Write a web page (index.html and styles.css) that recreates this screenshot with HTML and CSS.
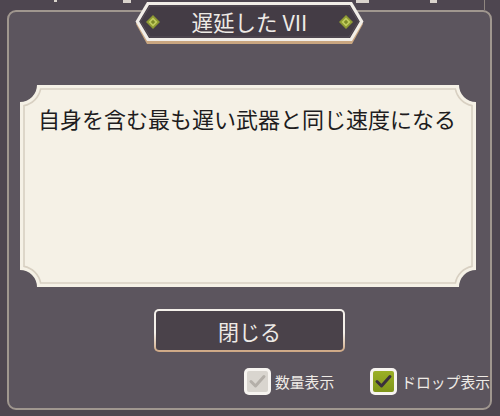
FILE: index.html
```html
<!DOCTYPE html>
<html lang="ja">

<head>
<title>遅延した VII</title>
<meta charset="utf-8" />
<meta name="viewport" content="width=device-width, initial-scale=1.0">

<link rel="stylesheet" href="styles.css">
</head>

<body>
<div class="screen">
  <div class="topbar">
    <span class="mark mark-a"></span>
    <span class="mark mark-b"></span>
    <span class="mark mark-c"></span>
    <span class="mark mark-d"></span>
    <span class="mark mark-e"></span>
  </div>

  <div class="panel">
    <!-- title plate -->
    <div class="title">
      <svg class="title-bg" width="229" height="44" viewBox="0 0 229 44">
        <path d="M12,4 H217 L228,23 L217,43 H12 L1,23 Z" fill="#c9a680"/>
        <path d="M12,1 H217 L228.5,20.5 L217,40 H12 L0.5,20.5 Z" fill="#f2eee8"/>
        <path d="M14,4 H215 L224.8,20.5 L215,37 H14 L4.2,20.5 Z" fill="#443c45"/>
        <path d="M15,5 H214 L223.6,20.5 L214,36 H15 L5.4,20.5 Z" fill="none" stroke="#574f58" stroke-width="1"/>
        <g transform="translate(18 21)">
          <path d="M0,-7 L7,0 L0,7 L-7,0 Z" fill="#8e9a33"/>
          <path d="M0,-4.5 L4.5,0 L0,4.5 L-4.5,0 Z" fill="#c2cc5e"/>
          <path d="M0,-2.2 L2.2,0 L0,2.2 L-2.2,0 Z" fill="#7d8a28"/>
        </g>
        <g transform="translate(211 21)">
          <path d="M0,-7 L7,0 L0,7 L-7,0 Z" fill="#8e9a33"/>
          <path d="M0,-4.5 L4.5,0 L0,4.5 L-4.5,0 Z" fill="#c2cc5e"/>
          <path d="M0,-2.2 L2.2,0 L0,2.2 L-2.2,0 Z" fill="#7d8a28"/>
        </g>
      </svg>
      <span class="title-text">遅延した VII</span>
    </div>

    <!-- description card with notched corners -->
    <div class="desc">
      <svg class="desc-bg" width="456" height="202" viewBox="0 0 456 202">
        <path d="M17,0 H439 A17 17 0 0 0 456,17 V185 A17 17 0 0 0 439,202 H17 A17 17 0 0 0 0,185 V17 A17 17 0 0 0 17,0 Z" fill="#f5f1e6"/>
        <path d="M20.6,4 H435.4 A21 21 0 0 0 452,20.6 V181.4 A21 21 0 0 0 435.4,198 H20.6 A21 21 0 0 0 4,181.4 V20.6 A21 21 0 0 0 20.6,4 Z" fill="none" stroke="#d8d0c2" stroke-width="1.6"/>
      </svg>
      <p class="desc-text">自身を含む最も遅い武器と同じ速度になる</p>
    </div>

    <button class="close"><span>閉じる</span></button>

    <div class="options">
      <label class="opt">
        <span class="box box-off">
          <svg width="21" height="21" viewBox="0 0 21 21"><polyline points="4,10.5 8.5,15 17,5.5" fill="none" stroke="#b4afa9" stroke-width="3" stroke-linecap="round" stroke-linejoin="round"/></svg>
        </span>
        数量表示
      </label>
      <label class="opt">
        <span class="box box-on">
          <svg width="21" height="21" viewBox="0 0 21 21"><polyline points="4,10.5 8.5,15 17,5.5" fill="none" stroke="#3a2f3c" stroke-width="3" stroke-linecap="round" stroke-linejoin="round"/></svg>
        </span>
        ドロップ表示
      </label>
    </div>
  </div>
</div>
</body>

</html>
```

FILE: styles.css
```css
body {
  margin: 0;
  background-color: #4e4650;
  font-family: "Noto Sans CJK JP", "Noto Sans", sans-serif;
  color: #efebe6;
}

.screen {
  width: 500px;
  height: 416px;
  overflow: hidden;
}

/* bits of the window above, cut off at the top edge */
.topbar {
  height: 10px;
  display: flex;
  align-items: flex-start;
}

.mark {
  display: block;
  height: 3px;
  background-color: #d9d3cc;
}

.mark-a { margin-left: 54px; width: 3px; height: 2px; }
.mark-b { margin-left: 66px; width: 8px; }
.mark-c { margin-left: 225px; width: 13px; }
.mark-d { margin-left: 61px; width: 7px; }
.mark-e { margin-left: 47px; width: 1px; height: 10px; background-color: #8f8680; }

.panel {
  box-sizing: border-box;
  width: 485px;
  height: 400px;
  margin-left: 7px;
  border: 2px solid #a0978f;
  border-radius: 9px;
  background-color: #5c555e;
  display: flex;
  flex-direction: column;
  align-items: center;
}

.title {
  position: relative;
  width: 229px;
  height: 44px;
  margin-top: -11px;
  display: flex;
  align-items: center;
  justify-content: center;
}

.title-bg {
  position: absolute;
  left: 0;
  top: 0;
}

.title-text {
  position: relative;
  font-size: 21.5px;
  line-height: 1;
  margin-top: -2px;
  color: #eeeae5;
}

.desc {
  position: relative;
  align-self: flex-start;
  width: 456px;
  height: 202px;
  margin-top: 40px;
  margin-left: 11px;
}

.desc-bg {
  position: absolute;
  left: 0;
  top: 0;
}

.desc-text {
  position: relative;
  margin: 0;
  padding: 17px 0 0 18px;
  font-size: 22px;
  line-height: 32px;
  color: #201c1d;
}

.close {
  box-sizing: border-box;
  width: 191px;
  height: 43px;
  margin-top: 22px;
  padding: 2px;
  border: none;
  border-radius: 5px;
  background: linear-gradient(#f4f0ea 55%, #cda682);
  font-family: inherit;
}

.close span {
  display: flex;
  align-items: center;
  justify-content: center;
  height: 100%;
  border-radius: 3px;
  background-color: #4a424a;
  font-size: 21px;
  color: #eeeae6;
}

.options {
  align-self: stretch;
  display: flex;
  margin-top: 16px;
  padding-left: 235px;
}

.opt {
  display: flex;
  align-items: center;
  gap: 4px;
  font-size: 14.8px;
  white-space: nowrap;
}

.opt:first-child {
  width: 129px;
}

.box {
  box-sizing: border-box;
  width: 27px;
  height: 27px;
  padding: 3px;
  border-radius: 5px;
  background-color: #f7f4f0;
  flex-shrink: 0;
}

.box svg {
  display: block;
  border-radius: 2px;
}

.box-off svg {
  background-color: #d9d5cf;
}

.box-on svg {
  background: linear-gradient(#9bb026, #7f951a);
}
```
